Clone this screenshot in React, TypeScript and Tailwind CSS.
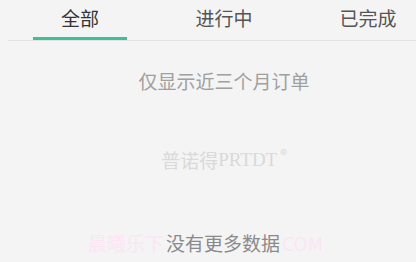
export default function App() {
  const tabs = ["全部", "进行中", "已完成"];
  return (
    <div
      className="w-[448px] h-[262px] bg-[#f4f4f4] overflow-hidden"
      style={{ fontFamily: '"Noto Sans CJK SC", "Noto Sans", sans-serif' }}
    >
      <div className="ml-2 w-[432px] flex border-b border-[#e2e2e2]">
        {tabs.map((t, i) => (
          <div key={t} className="flex-1 flex flex-col items-center">
            <div
              className={`h-[37px] flex items-center text-[19px] ${
                i === 0 ? "text-[#333]" : "text-[#555]"
              }`}
            >
              {t}
            </div>
            <div className={`h-[3px] w-[94px] ${i === 0 ? "bg-[#3cc09a]" : ""}`} />
          </div>
        ))}
      </div>
      <div className="flex flex-col items-center">
        <div className="mt-[26px] text-[19px] leading-[28px] text-[#a0a0a0]">仅显示近三个月订单</div>
        <div className="mt-[51px] flex items-start text-[19px] leading-[28px] text-[#d9d9d9]">
          <span>普诺得</span>
          <span style={{ fontFamily: '"Liberation Serif", serif' }}>PRTDT</span>
          <span className="ml-[3px] mt-[1px] text-[14px] leading-[14px]">®</span>
        </div>
        <div className="mt-[55px] w-full flex text-[19px] leading-[28px] whitespace-nowrap">
          <div className="ml-[88px] w-[78px] text-[#fbe6f3]">晨曦乐下</div>
          <div className="text-[#8a8a8a]">没有更多数据</div>
          <div className="ml-[2px] text-[#fbe6f3]">COM</div>
        </div>
      </div>
    </div>
  );
}
